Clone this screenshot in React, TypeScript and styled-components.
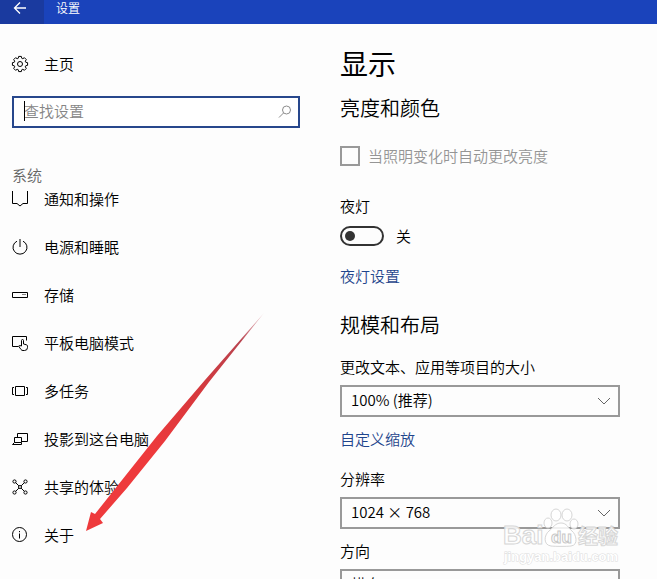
import React from "react";
import styled, { createGlobalStyle } from "styled-components";

const GlobalStyle = createGlobalStyle`
  *, *::before, *::after { box-sizing: border-box; }
  html, body { margin: 0; height: 100%; }
  #root { height: 100%; }
  body {
    background: #fdfdfd;
    color: #000;
    font-family: "Noto Sans CJK SC", "Noto Sans", sans-serif;
    font-size: 15px;
    font-weight: 350;
    line-height: 20px;
  }
  input, select, button { font: inherit; color: inherit; }
`;

const Window = styled.div`
  position: relative;
  display: flex;
  flex-direction: column;
  height: 100vh;
  overflow: hidden;
`;

const TitleBar = styled.header`
  display: flex;
  gap: 12px;
  height: 24px;
  background: #1a43bb;
  color: #fff;
`;

const BackButton = styled.button`
  width: 44px;
  padding: 0 4px 9px 0;
  border: 0;
  background: #1a3a9f;
  color: #fff;
  display: flex;
  align-items: center;
  justify-content: center;
`;

const WindowTitle = styled.span`
  font-size: 12px;
  line-height: 16px;
`;

const Body = styled.div`
  flex: 1;
  min-height: 0;
  display: grid;
  grid-template-columns: 300px 1fr;
  column-gap: 40px;
`;

const Sidebar = styled.aside`
  min-height: 0;
  display: flex;
  flex-direction: column;
  padding: 28px 0 0 12px;
`;

const NavLink = styled.a<{ $tall?: boolean }>`
  display: flex;
  align-items: center;
  gap: 16px;
  height: ${(p) => (p.$tall ? "48px" : "24px")};
  line-height: 16px;
  color: #000;
  text-decoration: none;
`;

const Icon = styled.svg`
  flex: none;
  width: 16px;
  height: 16px;
  overflow: visible;
  fill: none;
  stroke: currentColor;
`;

const SearchBox = styled.div`
  position: relative;
  margin-top: 20px;
`;

const SearchInput = styled.input`
  display: block;
  width: 100%;
  height: 32px;
  padding: 0 32px 3px 10px;
  border: 2px solid #27478c;
  border-radius: 0;
  background: #fff;
  outline: 0;
  &::placeholder { color: #858585; opacity: 1; }
`;

const Caret = styled.span`
  position: absolute;
  left: 12px;
  top: 5px;
  width: 1px;
  height: 20px;
  background: #000;
`;

const SearchIcon = styled(Icon)`
  position: absolute;
  right: 7px;
  top: 8px;
  color: #8c8c8c;
`;

const Group = styled.h2`
  margin: 37px 0 6px;
  font-size: 15px;
  font-weight: 350;
  line-height: 20px;
  color: #666;
`;

const NavScroll = styled.nav`
  flex: 1;
  min-height: 0;
  overflow: hidden;
`;

const NavList = styled.ul`
  list-style: none;
  margin: -16px 0 0;
  padding: 0;
`;

const Main = styled.main`
  min-height: 0;
  overflow: hidden;
  padding: 22px 36px 0 0;
`;

const PageTitle = styled.h1`
  margin: 0;
  font-size: 28px;
  font-weight: 400;
  line-height: 34px;
`;

const SectionTitle = styled.h2<{ $top: number }>`
  margin: ${(p) => p.$top}px 0 0;
  font-size: 20px;
  font-weight: 350;
  line-height: 28px;
`;

const CheckRow = styled.label`
  display: flex;
  align-items: center;
  gap: 8px;
  margin-top: 24px;
  color: #959595;
`;

const CheckBox = styled.input`
  appearance: none;
  width: 20px;
  height: 20px;
  margin: 0;
  border: 2px solid #999;
`;

const FieldLabel = styled.label<{ $top: number }>`
  display: block;
  margin-top: ${(p) => p.$top}px;
  margin-bottom: 8px;
`;

const ToggleRow = styled.div`
  display: flex;
  align-items: center;
  gap: 12px;
  padding-top: 2px;
`;

const Toggle = styled.input`
  appearance: none;
  display: flex;
  align-items: center;
  width: 44px;
  height: 20px;
  margin: 0;
  padding: 0 3px;
  border: 2px solid #333;
  border-radius: 10px;
  &::before {
    content: "";
    width: 10px;
    height: 10px;
    border-radius: 50%;
    background: #333;
  }
  &:checked { justify-content: flex-end; }
`;

const TextLink = styled.a<{ $top: number }>`
  display: block;
  width: fit-content;
  margin-top: ${(p) => p.$top}px;
  color: #1f458c;
  text-decoration: none;
`;

const SelectBox = styled.div`
  position: relative;
  max-width: 280px;
`;

const Select = styled.select`
  appearance: none;
  display: block;
  width: 100%;
  height: 32px;
  padding: 0 32px 2px 9px;
  border: 2px solid #999;
  border-radius: 0;
  background: transparent;
`;

const Chevron = styled(Icon)`
  position: absolute;
  right: 8px;
  top: 8px;
  color: #666;
  pointer-events: none;
`;

const Pointer = styled.svg`
  position: absolute;
  left: 82px;
  top: 308px;
  width: 184px;
  height: 226px;
  pointer-events: none;
`;

const Watermark = styled.svg`
  position: absolute;
  right: 34px;
  bottom: 12px;
  width: 122px;
  height: 62px;
  pointer-events: none;
  font-family: "Liberation Sans", "Noto Sans CJK SC", sans-serif;
`;

const gearPath = (() => {
  const points: string[] = [];
  for (let i = 0; i < 8; i++) {
    [[-17, 6], [-10, 7.7], [10, 7.7], [17, 6]].forEach(([d, r]) => {
      const a = ((i * 45 + d) * Math.PI) / 180;
      points.push(`${(8 + r * Math.sin(a)).toFixed(2)} ${(8 - r * Math.cos(a)).toFixed(2)}`);
    });
  }
  return `M${points.join("L")}Z`;
})();

const items: { label: string; icon: React.ReactNode }[] = [
  { label: "通知和操作", icon: <path d="M.5-2.5v15H5L8 15l3-2.5h4.5v-15z" /> },
  {
    label: "电源和睡眠",
    icon: <path d="M8 0v8M5 2.2a7 6.8 0 1 0 6 0" />,
  },
  {
    label: "存储",
    icon: (
      <>
        <path d="M.5 5.5h15v5H.5z" />
        <path d="M10.5 7.5h1M12.5 7.5h1" />
      </>
    ),
  },
  {
    label: "平板电脑模式",
    icon: (
      <>
        <path d="M6.5 11.5h-6v-10h14v4" />
        <path d="M9.5 11V5.5q0-1 1-1t1 1v3.500l3 .8q1 .3 1 1.400v1.300q0 3-3 3h-1.500q-1.300 0-2-1L7 11.700q-.4-1.200.6-1.200z" />
      </>
    ),
  },
  {
    label: "多任务",
    icon: <path d="M3.5 3.5h9v9h-9zM2 4.5H.5v7H2M14 4.5h1.5v7H14" />,
  },
  {
    label: "投影到这台电脑",
    icon: <path d="M5.5 6.5v-4h10v8h-6M2.5 6.5h7v5h-7zM2.5 11.5l-2 2h9v-2" />,
  },
  {
    label: "共享的体验",
    icon: (
      <>
        <circle cx="8" cy="8" r="1.5" />
        <circle cx="2.5" cy="2.5" r="1.6" />
        <circle cx="13.5" cy="2.5" r="1.6" />
        <circle cx="2.5" cy="13.5" r="1.6" />
        <circle cx="13.5" cy="13.5" r="1.6" />
        <path d="m3.7 3.7 3.2 3.2M12.3 3.7 9.1 6.9M3.7 12.3l3.2-3.2M12.3 12.3 9.1 9.1" />
      </>
    ),
  },
  {
    label: "关于",
    icon: (
      <>
        <circle cx="7.5" cy="7.5" r="7" />
        <path d="M7.5 6.5v5M7.5 4v1.2" />
      </>
    ),
  },
];

function Dropdown({ id, value }: { id: string; value: string }) {
  return (
    <SelectBox>
      <Select id={id} defaultValue={value}>
        <option>{value}</option>
      </Select>
      <Chevron viewBox="0 0 16 16" aria-hidden="true">
        <path d="m2 5 6 6 6-6" />
      </Chevron>
    </SelectBox>
  );
}

export default function App() {
  return (
    <Window>
      <GlobalStyle />
      <TitleBar>
        <BackButton aria-label="返回">
          <Icon viewBox="0 0 16 16" strokeWidth="1.3">
            <path d="M14 8H2.5M8 2.5 2.5 8 8 13.5" />
          </Icon>
        </BackButton>
        <WindowTitle>设置</WindowTitle>
      </TitleBar>
      <Body>
        <Sidebar>
          <NavLink href="#home">
            <Icon viewBox="0 0 16 16">
              <path d={gearPath} />
              <circle cx="8" cy="8" r="2.5" />
            </Icon>
            主页
          </NavLink>
          <SearchBox>
            <SearchInput type="text" placeholder="查找设置" aria-label="查找设置" />
            <Caret />
            <SearchIcon viewBox="0 0 16 16" aria-hidden="true">
              <circle cx="9.5" cy="6" r="4" />
              <path d="M6.5 9 2 13.5" />
            </SearchIcon>
          </SearchBox>
          <Group>系统</Group>
          <NavScroll>
            <NavList>
              {items.map((item) => (
                <li key={item.label}>
                  <NavLink $tall href={`#${item.label}`}>
                    <Icon viewBox="0 0 16 16">{item.icon}</Icon>
                    {item.label}
                  </NavLink>
                </li>
              ))}
            </NavList>
          </NavScroll>
        </Sidebar>
        <Main>
          <PageTitle>显示</PageTitle>
          <SectionTitle $top={14}>亮度和颜色</SectionTitle>
          <CheckRow>
            <CheckBox type="checkbox" disabled />
            当照明变化时自动更改亮度
          </CheckRow>
          <FieldLabel $top={30} htmlFor="night">夜灯</FieldLabel>
          <ToggleRow>
            <Toggle id="night" type="checkbox" role="switch" />
            <span>关</span>
          </ToggleRow>
          <TextLink $top={20} href="#night">夜灯设置</TextLink>
          <SectionTitle $top={25}>规模和布局</SectionTitle>
          <FieldLabel $top={18} htmlFor="scale">更改文本、应用等项目的大小</FieldLabel>
          <Dropdown id="scale" value="100% (推荐)" />
          <TextLink $top={12} href="#custom">自定义缩放</TextLink>
          <FieldLabel $top={20} htmlFor="resolution">分辨率</FieldLabel>
          <Dropdown id="resolution" value="1024 × 768" />
          <FieldLabel $top={12} htmlFor="orientation">方向</FieldLabel>
          <Dropdown id="orientation" value="横向" />
        </Main>
      </Body>
      <Pointer viewBox="82 308 184 226" aria-hidden="true">
        <defs>
          <linearGradient id="shaft" gradientUnits="userSpaceOnUse" x1="263" y1="313" x2="150" y2="450">
            <stop offset="0" stopColor="#c45a68" stopOpacity="0.3" />
            <stop offset="0.2" stopColor="#b9434f" />
            <stop offset="0.6" stopColor="#d8383c" />
            <stop offset="1" stopColor="#ee3a3c" />
          </linearGradient>
        </defs>
        <path d="M264 313 205 380 157 436 95 514 91 512 86 531 103 523 100 519 127 488 165 441 209 382Z" fill="url(#shaft)" />
      </Pointer>
      <Watermark viewBox="0 0 122 62" aria-hidden="true">
        <g fill="#fff" fillOpacity="0.85" stroke="#d6d6d6" strokeWidth="1">
          <ellipse cx="47" cy="18" rx="4" ry="5" />
          <ellipse cx="55" cy="10" rx="5" ry="6" />
          <ellipse cx="66" cy="10" rx="5" ry="6" />
          <ellipse cx="73" cy="19" rx="4" ry="5" />
          <path d="M60 18c6 0 7 5 11 8s7 14-1 15c-4 .5-16 .5-20 0-8-1-7-11-2-15 4-3 6-8 12-8z" />
          <text x="2" y="39" fontSize="26" fontWeight="700">Bai</text>
          <text x="77" y="39" fontSize="20" fontWeight="700">经验</text>
        </g>
        <text x="50" y="38" fontSize="17" fontWeight="700" fill="#fff" stroke="#c8c8c8">du</text>
        <text x="3" y="56" fontSize="13" fontWeight="700" fill="#fff" stroke="#dcdcdc" strokeWidth="1" paintOrder="stroke">
          jingyan.baidu.com
        </text>
      </Watermark>
    </Window>
  );
}
